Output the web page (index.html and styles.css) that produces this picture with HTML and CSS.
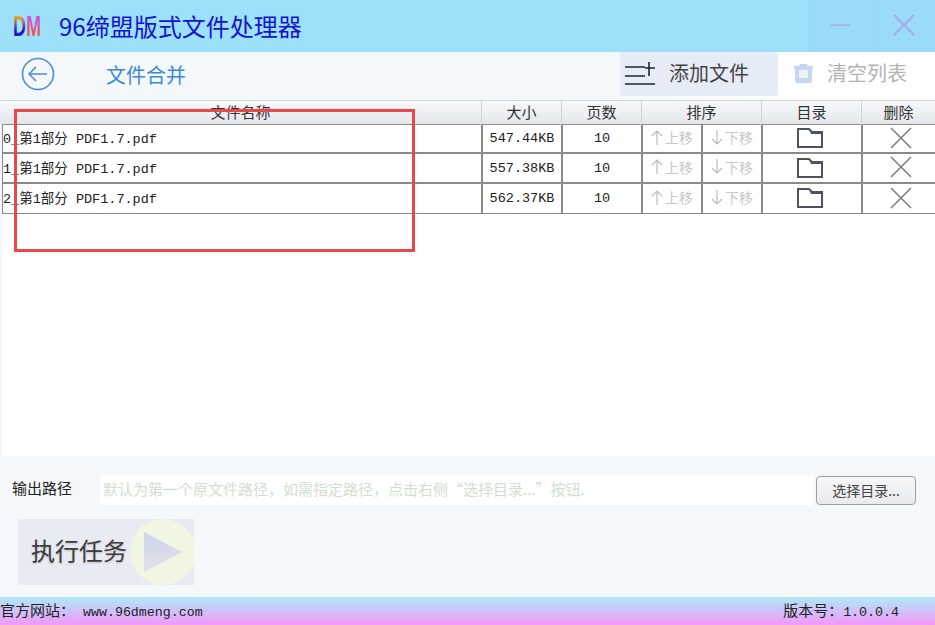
FILE: index.html
```html
<!doctype html>
<html lang="zh-CN">
  <head>
    <meta charset="UTF-8" />
    <title>96缔盟版式文件处理器</title>
    <link rel="stylesheet" href="styles.css">
  </head>
  <body>
    <div class="app">
      <div class="titlebar">
        <div class="logo"><span class="logo-d">D</span><span class="logo-m">M</span></div>
        <div class="app-name">96缔盟版式文件处理器</div>
        <div class="win-btn">
          <svg width="22" height="22" viewBox="0 0 22 22"><path d="M1 11H21" stroke="#a6b8ee" stroke-width="2" fill="none"/></svg>
        </div>
        <div class="win-btn">
          <svg width="22" height="22" viewBox="0 0 22 22"><path d="M1 1L21 21M21 1L1 21" stroke="#a9a8ee" stroke-width="2" fill="none"/></svg>
        </div>
      </div>

      <div class="toolbar">
        <svg class="back-icon" width="34" height="34" viewBox="0 0 34 34">
          <circle cx="17" cy="17" r="15.5" stroke="#4a8cd8" stroke-width="1.6" fill="none"/>
          <path d="M26 17H8M15 10L8 17L15 24" stroke="#4a8cd8" stroke-width="1.5" fill="none"/>
        </svg>
        <div class="page-title">文件合并</div>
        <div class="tool-btn tool-add">
          <svg width="31" height="26" viewBox="0 0 31 26">
            <path d="M0 7H20M0 16H20M0 24H30M24 2V16M20 8H30" stroke="#20242c" stroke-width="1.6" fill="none"/>
          </svg>
          <span>添加文件</span>
        </div>
        <div class="tool-btn tool-clear">
          <svg width="19" height="19" viewBox="0 0 19 19">
            <path d="M0 2H5L6 0H13L14 2H19V5H18V17L17 19H2L1 17V5H0Z" fill="#c4d8f2"/>
            <rect x="5" y="6" width="9" height="8" fill="#edf3fb"/>
          </svg>
          <span>清空列表</span>
        </div>
      </div>

      <div class="file-area">
        <div class="row head">
          <div class="cell">文件名称</div>
          <div class="cell">大小</div>
          <div class="cell">页数</div>
          <div class="cell">排序</div>
          <div class="cell">目录</div>
          <div class="cell">删除</div>
        </div>

        <div class="row file">
          <div class="cell name">0_第1部分 PDF1.7.pdf</div>
          <div class="cell mono">547.44KB</div>
          <div class="cell mono">10</div>
          <div class="cell sort">
            <div class="move">
              <svg width="12" height="15" viewBox="0 0 12 15"><path d="M6 15V1M1 6L6 1L11 6" stroke="#bcbcbc" stroke-width="1.2" fill="none"/></svg>
              上移
            </div>
            <div class="move">
              <svg width="12" height="15" viewBox="0 0 12 15"><path d="M6 0V14M1 9L6 14L11 9" stroke="#bcbcbc" stroke-width="1.2" fill="none"/></svg>
              下移
            </div>
          </div>
          <div class="cell">
            <svg class="folder" width="26" height="20" viewBox="0 0 26 20"><path d="M1 1H12L15 4H25V19H1Z" fill="#fff" stroke="#4d5360" stroke-width="2"/><path d="M12 1L15 4H25V6H14Z" fill="#4d5360"/></svg>
          </div>
          <div class="cell">
            <svg class="del" width="22" height="22" viewBox="0 0 22 22"><path d="M1 1L21 21M21 1L1 21" stroke="#747474" stroke-width="1.4" fill="none"/></svg>
          </div>
        </div>

        <div class="row file">
          <div class="cell name">1_第1部分 PDF1.7.pdf</div>
          <div class="cell mono">557.38KB</div>
          <div class="cell mono">10</div>
          <div class="cell sort">
            <div class="move">
              <svg width="12" height="15" viewBox="0 0 12 15"><path d="M6 15V1M1 6L6 1L11 6" stroke="#bcbcbc" stroke-width="1.2" fill="none"/></svg>
              上移
            </div>
            <div class="move">
              <svg width="12" height="15" viewBox="0 0 12 15"><path d="M6 0V14M1 9L6 14L11 9" stroke="#bcbcbc" stroke-width="1.2" fill="none"/></svg>
              下移
            </div>
          </div>
          <div class="cell">
            <svg class="folder" width="26" height="20" viewBox="0 0 26 20"><path d="M1 1H12L15 4H25V19H1Z" fill="#fff" stroke="#4d5360" stroke-width="2"/><path d="M12 1L15 4H25V6H14Z" fill="#4d5360"/></svg>
          </div>
          <div class="cell">
            <svg class="del" width="22" height="22" viewBox="0 0 22 22"><path d="M1 1L21 21M21 1L1 21" stroke="#747474" stroke-width="1.4" fill="none"/></svg>
          </div>
        </div>

        <div class="row file">
          <div class="cell name">2_第1部分 PDF1.7.pdf</div>
          <div class="cell mono">562.37KB</div>
          <div class="cell mono">10</div>
          <div class="cell sort">
            <div class="move">
              <svg width="12" height="15" viewBox="0 0 12 15"><path d="M6 15V1M1 6L6 1L11 6" stroke="#bcbcbc" stroke-width="1.2" fill="none"/></svg>
              上移
            </div>
            <div class="move">
              <svg width="12" height="15" viewBox="0 0 12 15"><path d="M6 0V14M1 9L6 14L11 9" stroke="#bcbcbc" stroke-width="1.2" fill="none"/></svg>
              下移
            </div>
          </div>
          <div class="cell">
            <svg class="folder" width="26" height="20" viewBox="0 0 26 20"><path d="M1 1H12L15 4H25V19H1Z" fill="#fff" stroke="#4d5360" stroke-width="2"/><path d="M12 1L15 4H25V6H14Z" fill="#4d5360"/></svg>
          </div>
          <div class="cell">
            <svg class="del" width="22" height="22" viewBox="0 0 22 22"><path d="M1 1L21 21M21 1L1 21" stroke="#747474" stroke-width="1.4" fill="none"/></svg>
          </div>
        </div>
      </div>

      <div class="bottom">
        <div class="output-row">
          <label class="output-label">输出路径</label>
          <div class="output-path">默认为第一个原文件路径，如需指定路径，点击右侧“选择目录...”按钮.</div>
          <button class="pick-btn">选择目录...</button>
        </div>
        <div class="run-btn">
          <span class="run-text">执行任务</span>
          <div class="run-circle">
            <svg width="38" height="40" viewBox="0 0 38 40">
              <defs>
                <linearGradient id="play" x1="0" y1="0" x2="0" y2="1">
                  <stop offset="0" stop-color="#cfd4ec"/>
                  <stop offset="1" stop-color="#dfe3e8"/>
                </linearGradient>
              </defs>
              <path d="M0 0L38 20L0 40Z" fill="url(#play)"/>
            </svg>
          </div>
        </div>
      </div>

      <div class="statusbar">
        <span><span class="status-label">官方网站：</span> www.96dmeng.com</span>
        <span class="version"><span class="status-label">版本号：</span>1.0.0.4</span>
      </div>

      <div class="red-box"></div>
    </div>
  </body>
</html>
```

FILE: styles.css
```css
html,
body {
  margin: 0;
  padding: 0;
}

body {
  font-family: 'Noto Sans CJK SC', 'Noto Sans', sans-serif;
  color: #222;
}

.app {
  position: relative;
  display: flex;
  flex-direction: column;
  width: 935px;
  height: 625px;
  overflow: hidden;
  background: #f4f8fa;
}

.titlebar {
  display: flex;
  align-items: center;
  height: 52px;
  background: #9de0f9;
}

.logo {
  flex: none;
  width: 59px;
  padding-left: 13px;
  box-sizing: border-box;
  font-family: 'Liberation Sans', sans-serif;
  font-size: 30px;
  font-weight: bold;
  line-height: 52px;
  transform: scaleX(0.6);
  transform-origin: 13px 50%;
  white-space: nowrap;
}

.logo-d {
  background: linear-gradient(180deg, #f0a030 25%, #1a20c0 65%);
  -webkit-background-clip: text;
  color: transparent;
}

.logo-m {
  background: linear-gradient(180deg, #c858e0 25%, #f05050 75%);
  -webkit-background-clip: text;
  color: transparent;
}

.app-name {
  flex: 1;
  font-size: 24px;
  line-height: 52px;
  color: #1414d0;
}

.win-btn {
  display: flex;
  align-items: center;
  justify-content: center;
  width: 62px;
  height: 50px;
  padding-bottom: 2px;
  border-left: 1px solid #96d9f4;
  background: #9adcf8;
}

.toolbar {
  display: flex;
  align-items: center;
  height: 48px;
  background: linear-gradient(90deg, #f4f8fa 0%, #f4f8fa 66%, #ffffff 84%);
}

.back-icon {
  margin-left: 21px;
  margin-bottom: 4px;
}

.page-title {
  flex: 1;
  margin-left: 51px;
  margin-bottom: 4px;
  font-size: 20px;
  color: #3f88d6;
}

.tool-btn {
  display: flex;
  align-items: center;
  height: 44px;
  margin-bottom: 4px;
  font-size: 20px;
}

.tool-btn span {
  padding-bottom: 3px;
}

.tool-add {
  width: 158px;
  padding-left: 5px;
  box-sizing: border-box;
  gap: 13px;
  background: #e6ecf6;
  border-radius: 3px;
  color: #444;
}

.tool-add svg {
  margin-bottom: 2px;
}

.tool-clear {
  width: 157px;
  padding-left: 16px;
  box-sizing: border-box;
  gap: 14px;
  color: #b4b4b4;
}

.tool-clear svg {
  margin-bottom: 2px;
}

.file-area {
  height: 356px;
  margin-left: 2px;
  background: #fff;
}

.row {
  display: grid;
  grid-template-columns: 481px 80px 80px 120px 100px 72px;
}

.cell {
  display: flex;
  align-items: center;
  justify-content: center;
  box-sizing: border-box;
}

.head {
  height: 24px;
  box-sizing: border-box;
  margin-left: -2px;
  grid-template-columns: 482px 80px 80px 120px 100px 73px;
  border-top: 1px solid #d0d6dc;
  background: linear-gradient(180deg, #f8f9fb 0%, #e4e6ea 100%);
  font-size: 15px;
  color: #333;
}

.head .cell {
  padding-bottom: 4px;
  border-right: 1px solid #cfd3d8;
}

.head .cell:last-child {
  border-right: none;
}

.file {
  height: 30px;
  border-bottom: 2px solid #8a8a8a;
  box-sizing: border-box;
}

.file:last-child {
  border-bottom-width: 1px;
}

.head + .file {
  border-top: 1px solid #8a8a8a;
}

.file .cell {
  border-right: 2px solid #8a8a8a;
  font-family: 'Liberation Mono', 'Noto Sans CJK SC', monospace;
  font-size: 13.5px;
  color: #222;
}

.file .cell:last-child {
  border-right: none;
}

.file .name {
  justify-content: flex-start;
  padding-bottom: 3px;
  border-left: 1px solid #8a8a8a;
  white-space: pre;
}

.folder {
  margin-right: 4px;
  margin-bottom: 1px;
}

.del {
  margin-left: 4px;
  margin-bottom: 2px;
}

.file .sort {
  display: grid;
  grid-template-columns: 60px 1fr;
}

.move {
  display: flex;
  align-items: center;
  justify-content: center;
  gap: 2px;
  height: 100%;
  padding-bottom: 3px;
  box-sizing: border-box;
  font-family: 'Noto Sans CJK SC', sans-serif;
  font-size: 14px;
  color: #c8c8c8;
}

.move:first-child {
  border-right: 2px solid #8a8a8a;
}

.bottom {
  flex: 1;
}

.output-row {
  display: flex;
  align-items: center;
  height: 30px;
  margin-top: 19px;
}

.output-label {
  width: 100px;
  padding-left: 12px;
  padding-bottom: 5px;
  box-sizing: border-box;
  font-size: 15px;
  color: #222;
}

.output-path {
  width: 713px;
  height: 30px;
  padding-left: 3px;
  box-sizing: border-box;
  background: #fff;
  font-size: 15px;
  line-height: 28px;
  color: #cfdfd0;
  white-space: nowrap;
}

.pick-btn {
  width: 100px;
  height: 29px;
  margin-left: 3px;
  border: 1px solid #9aa0a6;
  border-radius: 4px;
  background: linear-gradient(180deg, #f6f7f9 0%, #e8eaee 100%);
  font-family: 'Noto Sans CJK SC', sans-serif;
  font-size: 14px;
  color: #444;
}

.run-btn {
  display: flex;
  align-items: center;
  width: 176px;
  height: 66px;
  margin: 14px 0 0 18px;
  background: #e8ebf2;
  overflow: hidden;
}

.run-text {
  margin-left: 13px;
  padding-bottom: 5px;
  font-size: 24px;
  color: #3c3c3c;
  text-shadow: 0 1px 2px rgba(0, 0, 0, 0.2);
  white-space: nowrap;
}

.run-circle {
  display: flex;
  align-items: center;
  justify-content: center;
  width: 66px;
  height: 66px;
  flex: none;
  margin-left: 3px;
  border-radius: 50%;
  background: #f1f6e2;
}

.statusbar {
  display: flex;
  align-items: center;
  justify-content: space-between;
  height: 28px;
  padding-bottom: 4px;
  box-sizing: border-box;
  background: linear-gradient(180deg, #aeeaf8 0%, #f298fa 100%);
  font-family: 'Liberation Mono', 'Noto Sans CJK SC', monospace;
  font-size: 13.3px;
  color: #222;
  white-space: pre;
}

.status-label {
  font-family: 'Noto Sans CJK SC', sans-serif;
  font-size: 15px;
}

.version {
  padding-right: 36px;
}

.red-box {
  position: absolute;
  left: 14px;
  top: 109px;
  width: 401px;
  height: 143px;
  box-sizing: border-box;
  border: 3px solid #e8474c;
}
```
